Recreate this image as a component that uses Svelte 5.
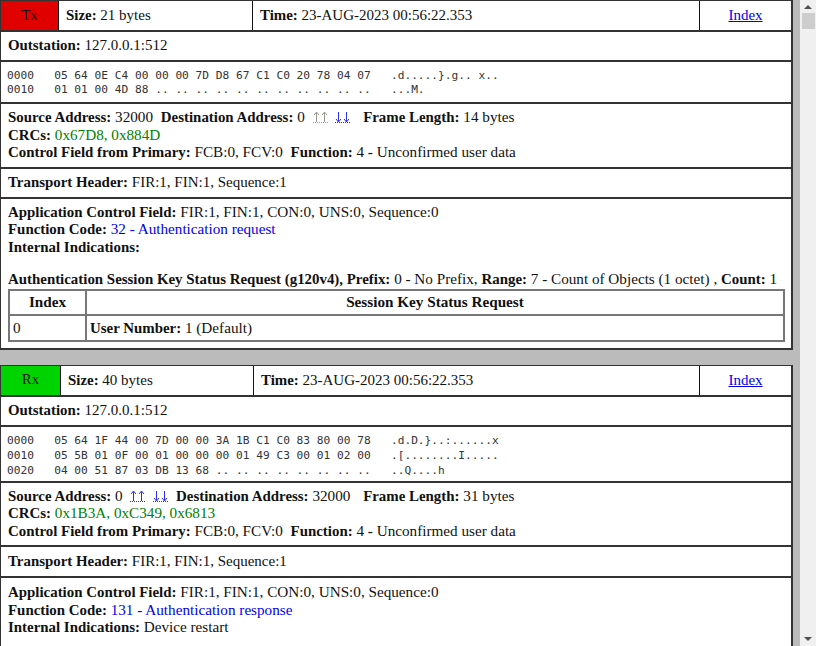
<script>
  const panels = [
    {
      dir: 'Tx',
      dirWidth: 57,
      timeWidth: 447,
      size: '21 bytes',
      time: '23-AUG-2023 00:56:22.353',
      hex: [
        '0000   05 64 0E C4 00 00 00 7D D8 67 C1 C0 20 78 04 07   .d.....}.g.. x..',
        '0010   01 01 00 4D 88 .. .. .. .. .. .. .. .. .. .. ..   ...M.',
      ],
      source: '32000',
      dest: '0',
      upOnSource: false,
      length: '14 bytes',
      crcs: '0x67D8, 0x884D',
      functionCode: '32 - Authentication request',
      iin: '',
    },
    {
      dir: 'Rx',
      dirWidth: 59,
      timeWidth: 446,
      size: '40 bytes',
      time: '23-AUG-2023 00:56:22.353',
      hex: [
        '0000   05 64 1F 44 00 7D 00 00 3A 1B C1 C0 83 80 00 78   .d.D.}..:......x',
        '0010   05 5B 01 0F 00 01 00 00 00 01 49 C3 00 01 02 00   .[........I.....',
        '0020   04 00 51 87 03 DB 13 68 .. .. .. .. .. .. .. ..   ..Q....h',
      ],
      source: '0',
      dest: '32000',
      upOnSource: true,
      length: '31 bytes',
      crcs: '0x1B3A, 0xC349, 0x6813',
      functionCode: '131 - Authentication response',
      iin: 'Device restart',
    },
  ];
</script>

{#snippet arrows(visited)}
  <a href="#up" class="arrow" class:visited aria-label="Previous">
    <svg width="15" height="12" viewBox="0 0 15 12">
      <path d="M3.5 11V1.5M1 4l2.5-3L6 4M11.5 11V1.5M9 4l2.5-3L14 4" />
      <path class="dots" d="M0 11.5h15" />
    </svg>
  </a>
  <a href="#down" class="arrow" aria-label="Next">
    <svg width="15" height="12" viewBox="0 0 15 12">
      <path d="M3.5 1v9.5M1 8l2.5 3L6 8M11.5 1v9.5M9 8l2.5 3L14 8" />
      <path class="dots" d="M0 11.5h15" />
    </svg>
  </a>
{/snippet}

<div class="window">
  <main class="page">
    {#each panels as p, i}
      <section class="panel">
        <div class="row head">
          <div class="dir" class:tx={p.dir === 'Tx'} class:rx={p.dir === 'Rx'} style="width: {p.dirWidth}px">{p.dir}</div>
          <div class="cell size"><b>Size:</b> {p.size}</div>
          <div class="cell time" style="width: {p.timeWidth}px"><b>Time:</b> {p.time}</div>
          <div class="cell index"><a href="#index">Index</a></div>
        </div>
        <div class="row line"><b>Outstation:</b> 127.0.0.1:512</div>
        <pre class="row hex">{p.hex.join('\n')}</pre>
        <div class="row block">
          <div class="addr">
            <b>Source Address:</b> {p.source}
            {#if p.upOnSource}{@render arrows(false)}{/if}
            <b class="gap">Destination Address:</b> {p.dest}
            {#if !p.upOnSource}{@render arrows(true)}{/if}
            <b class="frame">Frame Length:</b> {p.length}
          </div>
          <div><b>CRCs:</b> <span class="crc">{p.crcs}</span></div>
          <div><b>Control Field from Primary:</b> FCB:0, FCV:0 <b class="gap">Function:</b> 4 - Unconfirmed user data</div>
        </div>
        <div class="row line transport"><b>Transport Header:</b> FIR:1, FIN:1, Sequence:1</div>
        <div class="row block last">
          <div><b>Application Control Field:</b> FIR:1, FIN:1, CON:0, UNS:0, Sequence:0</div>
          <div><b>Function Code:</b> <span class="fn">{p.functionCode}</span></div>
          <div><b>Internal Indications:</b> {p.iin}</div>
          {#if i === 0}
            <div class="objects">
              <b>Authentication Session Key Status Request (g120v4), Prefix:</b> 0 - No Prefix, <b>Range:</b> 7 - Count of Objects (1 octet) , <b>Count:</b> 1
            </div>
            <table>
              <thead>
                <tr><th class="idx">Index</th><th>Session Key Status Request</th></tr>
              </thead>
              <tbody>
                <tr><td>0</td><td><b>User Number:</b> 1 (Default)</td></tr>
              </tbody>
            </table>
          {:else}
            <div class="cutoff"><b>Authentication Session Key Status Response (g120v5), Prefix:</b></div>
          {/if}
        </div>
      </section>
    {/each}
  </main>

  <div class="scrollbar">
    <span class="up"></span>
    <span class="thumb"></span>
    <span class="spacer"></span>
    <span class="down"></span>
  </div>
</div>

<style>
  :global(body) {
    margin: 0;
    overflow: hidden;
  }

  .window {
    display: flex;
    width: 816px;
    height: 646px;
    overflow: hidden;
    font-family: 'Liberation Serif', 'Times New Roman', serif;
    font-size: 15.2px;
    line-height: 17.5px;
    color: #111;
  }

  b {
    font-size: 14.9px;
    line-height: 1;
  }

  .page {
    width: 800px;
    height: 646px;
    overflow: hidden;
    flex: none;
    background: #bbbbbb;
    display: flex;
    flex-direction: column;
    gap: 15px;
  }

  .panel {
    width: 793px;
    box-sizing: border-box;
    flex: none;
    background: #fff;
    border: 2px solid #333;
    border-top-width: 1px;
    border-left-width: 1px;
  }

  .row {
    border-bottom: 2px solid #333;
  }

  .row:last-child {
    border-bottom: 0;
  }

  .head {
    display: flex;
    height: 29px;
    font-size: 15px;
  }

  .dir {
    flex: none;
    display: flex;
    align-items: center;
    justify-content: center;
    border-right: 1px solid #111;
  }

  .tx {
    background: #e00000;
  }

  .rx {
    background: #00d400;
  }

  .cell {
    display: block;
    line-height: 28px;
    padding-left: 7px;
    box-sizing: border-box;
    white-space: pre-wrap;
  }

  .size {
    flex: 1 1 0;
    border-right: 1px solid #111;
  }

  .time {
    flex: none;
    border-right: 1px solid #111;
  }

  .index {
    width: 91px;
    flex: none;
    text-align: center;
    padding-left: 0;
  }

  .index a {
    color: #0000ee;
  }

  .line {
    height: 28px;
    padding-left: 7px;
    font-size: 15px;
    line-height: 26px;
  }

  .panel:last-child .transport {
    height: 29px;
    line-height: 28px;
  }

  .hex {
    margin: 0;
    padding: 7px 6px 5px;
    height: 28px;
    font-family: 'DejaVu Sans Mono', monospace;
    font-size: 11.2px;
    line-height: 14px;
    color: #333;
  }

  .panel:last-child .hex {
    padding: 6px 6px 4px;
    height: 44px;
    line-height: 15px;
  }

  .block {
    padding: 4px 7px 6px;
  }

  .panel:last-child .last {
    padding-top: 5px;
  }

  .addr {
    white-space: nowrap;
  }

  .gap {
    margin-left: 4px;
  }

  .frame {
    margin-left: 9px;
  }

  .arrow {
    margin-left: 4px;
  }

  .arrow svg {
    vertical-align: -1px;
    fill: none;
    stroke: #2a2af0;
    stroke-width: 1;
  }

  .arrow.visited svg {
    stroke: #9a9a90;
  }

  .dots {
    stroke-dasharray: 1 1;
  }

  .crc {
    color: #008000;
  }

  .fn {
    color: #0000ee;
  }

  .objects {
    margin-top: 15px;
    white-space: nowrap;
  }

  .cutoff {
    margin-top: 9px;
    padding-left: 58px;
    white-space: nowrap;
  }

  table {
    width: 777px;
    margin-top: 1px;
    border-collapse: collapse;
  }

  th,
  td {
    border: 2px solid #777;
    padding: 3px 3px;
    text-align: left;
  }

  th {
    padding: 2px 3px 4px;
    text-align: center;
  }

  .idx {
    width: 69px;
  }

  .scrollbar {
    width: 16px;
    flex: none;
    background: #f0f0f0;
    display: flex;
    flex-direction: column;
    align-items: center;
    padding: 5px 0;
    box-sizing: border-box;
  }

  .up,
  .down {
    width: 0;
    height: 0;
    border-left: 4px solid transparent;
    border-right: 4px solid transparent;
  }

  .up {
    border-bottom: 4px solid #505050;
  }

  .down {
    border-top: 4px solid #505050;
  }

  .thumb {
    width: 13px;
    height: 16px;
    margin-top: 4px;
    background: #cdcdcd;
  }

  .spacer {
    flex: 1;
  }
</style>
